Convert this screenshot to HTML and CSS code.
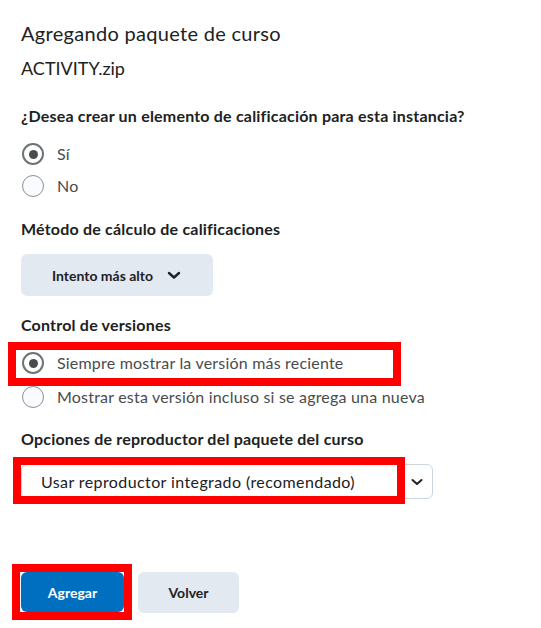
FILE: index.html
```html
<!DOCTYPE html>
<html lang="es">
<head>
<meta charset="UTF-8" />
<title>Agregando paquete de curso</title>
<link rel="stylesheet" href="styles.css">
</head>
<body>
  <div class="page">
    <h1>Agregando paquete de curso</h1>
    <div class="file">ACTIVITY.zip</div>

    <div class="label q">¿Desea crear un elemento de calificación para esta instancia?</div>
    <div class="radios">
      <div class="radio"><span class="dot on"></span>Sí</div>
      <div class="radio"><span class="dot"></span>No</div>
    </div>

    <div class="label">Método de cálculo de calificaciones</div>
    <button class="menu">Intento más alto
      <svg width="14" height="10" viewBox="0 0 14 10"><path d="M2 3l5 4.5L12 3" fill="none" stroke="#202122" stroke-width="2.4" stroke-linecap="round" stroke-linejoin="round"/></svg>
    </button>

    <div class="label ctrl">Control de versiones</div>
    <div class="radios wide">
      <div class="radio"><span class="dot on"></span>Siempre mostrar la versión más reciente<span class="mark m1"></span></div>
      <div class="radio"><span class="dot"></span>Mostrar esta versión incluso si se agrega una nueva</div>
    </div>

    <div class="label opts">Opciones de reproductor del paquete del curso</div>
    <div class="select">
      <span>Usar reproductor integrado (recomendado)</span>
      <svg width="14" height="10" viewBox="0 0 14 10"><path d="M2.5 3l4.5 4 4.5-4" fill="none" stroke="#202122" stroke-width="2" stroke-linecap="round" stroke-linejoin="round"/></svg>
      <span class="mark m2"></span>
    </div>

    <div class="actions">
      <button class="btn primary">Agregar<span class="mark m3"></span></button>
      <button class="btn">Volver</button>
    </div>
  </div>
</body>
</html>
```

FILE: styles.css
```css
body { margin: 0; background: #fff; font-family: Lato, "Open Sans", sans-serif; color: #202122; }
.page { padding: 18px 21px; }
h1 { font-size: 20px; font-weight: 400; line-height: 30px; margin: 0; letter-spacing: 0.3px; }
.file { font-size: 18px; line-height: 24px; margin-top: 8px; }
.label { font-size: 16px; font-weight: 700; line-height: 22px; margin-top: 20px; color: #202122; letter-spacing: 0.2px; }
.label.q { margin-top: 25px; }
.label.ctrl { margin-top: 18px; }
.label.opts { margin-top: 19px; }

.radios { margin-top: 15px; display: flex; flex-direction: column; gap: 8px; }
.radios.wide { margin-top: 15px; gap: 10px; }
.radio { position: relative; display: flex; align-items: center; gap: 13px; font-size: 16px; line-height: 24px; color: #494c4e; padding-left: 1px; letter-spacing: 0.2px; }
.dot { width: 22px; height: 22px; box-sizing: border-box; border-radius: 50%; border: 1px solid #8b9096; background: #f9fbff; display: flex; align-items: center; justify-content: center; }
.dot.on { border: 2px solid #6e7376; background: #fff; }
.dot.on::after { content: ""; width: 9px; height: 9px; border-radius: 50%; background: #494c4e; }

.menu { margin-top: 14px; height: 42px; width: 192px; border: none; border-radius: 6px; background: #e3e9f1; font-family: inherit; font-size: 14px; font-weight: 700; color: #202122; display: flex; align-items: center; justify-content: flex-start; gap: 14px; padding: 0 0 0 31px; }

.select { position: relative; margin-top: 14px; width: 412px; height: 35px; box-sizing: border-box; border: 1px solid #cdd5dc; border-radius: 6px; display: flex; align-items: center; justify-content: space-between; padding: 0 8px 0 19px; font-size: 16px; color: #202122; letter-spacing: 0.4px; }

.actions { margin-top: 73px; display: flex; gap: 14px; }
.btn { position: relative; height: 41px; width: 101px; border: none; border-radius: 6px; background: #e3e9f1; font-family: inherit; font-size: 14px; font-weight: 700; color: #202122; }
.btn.primary { width: 103px; height: 40px; background: #006fbf; color: #fff; }

.mark { position: absolute; box-sizing: border-box; border: 8px solid #ff0000; pointer-events: none; }
.m1 { left: -13px; top: -9px; width: 393px; height: 44px; }
.m2 { left: -9px; top: -8px; width: 392px; height: 47px; }
.m3 { left: -9px; top: -8px; width: 120px; height: 56px; }
```
